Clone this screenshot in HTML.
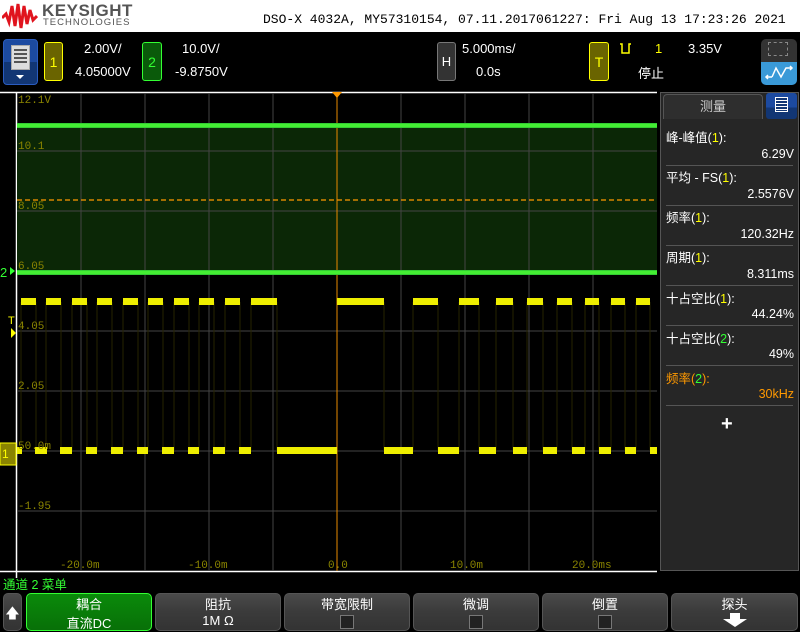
<!DOCTYPE html>
<html><head><meta charset="utf-8"><style>
*{margin:0;padding:0;box-sizing:border-box}
body{width:800px;height:632px;background:#000;position:relative;overflow:hidden;font-family:"Liberation Sans","Noto Sans CJK SC",sans-serif;color:#fff}
.a{position:absolute}
.mono{font-family:"Liberation Mono","Noto Sans CJK SC",monospace}
.btn{position:absolute;top:593px;height:38px;background:linear-gradient(#4a4a4a 0,#3c3c3c 45%,#333 100%);border:1px solid #555;border-radius:5px;text-align:center;font-size:13px;color:#fff}
.chk{display:inline-block;width:14px;height:14px;background:#222;border:1px solid #777;margin-top:2px}
.m{position:absolute;left:666px;width:128px;font-size:12.5px;color:#fff}
.sep{position:absolute;left:666px;width:127px;height:1px;background:#555}
</style></head><body>
<!-- header -->
<div class="a" style="left:0;top:0;width:800px;height:32px;background:#fff"></div>
<svg class="a" style="left:2px;top:2px" width="36" height="28" viewBox="0 0 36 28"><path d="M0 16 L4 12 L7 20 L10 4 L13 24 L16 2 L19 26 L22 4 L25 22 L28 8 L31 18 L35 14" stroke="#e0141e" stroke-width="3" fill="none"/></svg>
<div class="a" style="left:42px;top:1px;font-size:17px;font-weight:bold;color:#555;letter-spacing:0.5px">KEYSIGHT</div>
<div class="a" style="left:43px;top:17px;font-size:9.5px;color:#555;letter-spacing:1px">TECHNOLOGIES</div>
<div class="a mono" style="left:263px;top:12px;font-size:13px;color:#000;white-space:nowrap">DSO-X 4032A, MY57310154, 07.11.2017061227: Fri Aug 13 17:23:26 2021</div>
<!-- top bar -->
<div class="a" style="left:3px;top:39px;width:35px;height:46px;border-radius:4px;background:linear-gradient(#1c4aa0 0,#1c4aa0 50%,#123674 50%);border:1px solid #2a5cc0"></div>
<div class="a" style="left:11px;top:45px;width:19px;height:25px;background:#ddd;border:1px solid #aaa"></div>
<div class="a" style="left:14px;top:49px;width:13px;height:16px;background:repeating-linear-gradient(#555 0 2px,#ddd 2px 4px)"></div>
<div class="a" style="left:16px;top:75px;width:0;height:0;border-left:4px solid transparent;border-right:4px solid transparent;border-top:4px solid #fff"></div>
<div class="a" style="left:44px;top:42px;width:19px;height:39px;background:#6a6400;border:1px solid #ff0;border-radius:3px;color:#ff0;font-size:14px;text-align:center;line-height:38px">1</div>
<div class="a" style="left:84px;top:41px;font-size:13px">2.00V/</div>
<div class="a" style="left:75px;top:64px;font-size:13px">4.05000V</div>
<div class="a" style="left:142px;top:42px;width:20px;height:39px;background:#0a5a0a;border:1px solid #3f3;border-radius:3px;color:#3f3;font-size:14px;text-align:center;line-height:38px">2</div>
<div class="a" style="left:182px;top:41px;font-size:13px">10.0V/</div>
<div class="a" style="left:175px;top:64px;font-size:13px">-9.8750V</div>
<div class="a" style="left:437px;top:42px;width:19px;height:39px;background:#333;border:1px solid #777;border-radius:3px;font-size:13px;text-align:center;line-height:38px">H</div>
<div class="a" style="left:462px;top:41px;font-size:13px">5.000ms/</div>
<div class="a" style="left:476px;top:64px;font-size:13px">0.0s</div>
<div class="a" style="left:589px;top:42px;width:20px;height:39px;background:#6a6400;border:1px solid #ff0;border-radius:3px;color:#ff0;font-size:14px;text-align:center;line-height:38px">T</div>
<svg class="a" style="left:619px;top:43px" width="14" height="12"><path d="M1 1 H3 V10 H10 V1 H12" stroke="#ff0" stroke-width="1.5" fill="none"/></svg>
<div class="a" style="left:655px;top:41px;font-size:13px;color:#ff0">1</div>
<div class="a" style="left:688px;top:41px;font-size:13px">3.35V</div>
<div class="a" style="left:638px;top:63px;font-size:13px">停止</div>
<div class="a" style="left:761px;top:39px;width:36px;height:46px;border-radius:5px;background:linear-gradient(#333 0,#333 50%,#3a9ad8 50%)"></div>
<div class="a" style="left:768px;top:42px;width:20px;height:14px;border:1px dashed #888"></div>
<svg class="a" style="left:763px;top:64px" width="32" height="18"><path d="M3 13 L9 13 M5 11 L3 13 L5 15 M9 13 L13 4 L18 13 L23 4 L29 4 M27 2 L29 4 L27 6" stroke="#fff" stroke-width="1.5" fill="none"/></svg>
<!-- plot -->
<svg class="a" style="left:0;top:88px" width="660" height="490">
<line x1="0" y1="4.5" x2="657" y2="4.5" stroke="#fff" stroke-width="1.5"/>
<line x1="16.5" y1="4" x2="16.5" y2="490" stroke="#fff" stroke-width="1.5"/>
<line x1="0" y1="483.5" x2="657" y2="483.5" stroke="#fff" stroke-width="1.5"/>
<rect x="17" y="38" width="640" height="147" fill="#0b2706"/>
<g stroke="#444" stroke-width="1">
<line x1="81" y1="5" x2="81" y2="483"/><line x1="145" y1="5" x2="145" y2="483"/><line x1="209" y1="5" x2="209" y2="483"/><line x1="273" y1="5" x2="273" y2="483"/><line x1="401" y1="5" x2="401" y2="483"/><line x1="465" y1="5" x2="465" y2="483"/><line x1="529" y1="5" x2="529" y2="483"/><line x1="593" y1="5" x2="593" y2="483"/>
<line x1="17" y1="63" x2="657" y2="63"/><line x1="17" y1="123" x2="657" y2="123"/><line x1="17" y1="183" x2="657" y2="183"/><line x1="17" y1="243" x2="657" y2="243"/><line x1="17" y1="303" x2="657" y2="303"/><line x1="17" y1="363" x2="657" y2="363"/><line x1="17" y1="423" x2="657" y2="423"/>
</g>
<line x1="337" y1="5" x2="337" y2="483" stroke="#e88a00" stroke-width="1"/>
<line x1="17" y1="112" x2="657" y2="112" stroke="#f90" stroke-width="1.2" stroke-dasharray="5,3"/>
<rect x="17" y="35" width="640" height="5" fill="#3c3"/><rect x="17" y="36" width="640" height="3" fill="#4e3"/>
<rect x="17" y="182" width="640" height="5" fill="#3c3"/><rect x="17" y="183" width="640" height="3" fill="#4e3"/>
<g stroke="#262400" stroke-width="1">
<path d="M21 214V363M36 214V363M46 214V363M61 214V363M72 214V363M87 214V363M97 214V363M112 214V363M123 214V363M138 214V363M148 214V363M163 214V363M174 214V363M189 214V363M199 214V363M214 214V363M225 214V363M240 214V363M251 214V363M277 214V363M384 214V363M413 214V363M438 214V363M459 214V363M479 214V363M496 214V363M513 214V363M527 214V363M543 214V363M557 214V363M572 214V363M585 214V363M599 214V363M611 214V363M625 214V363M636 214V363M650 214V363"/>
</g>
<g fill="#ee0">
<rect x="21" y="210" width="15" height="7"/><rect x="46" y="210" width="15" height="7"/><rect x="72" y="210" width="15" height="7"/><rect x="97" y="210" width="15" height="7"/><rect x="123" y="210" width="15" height="7"/><rect x="148" y="210" width="15" height="7"/><rect x="174" y="210" width="15" height="7"/><rect x="199" y="210" width="15" height="7"/><rect x="225" y="210" width="15" height="7"/><rect x="251" y="210" width="26" height="7"/>
<rect x="337" y="210" width="47" height="7"/><rect x="413" y="210" width="25" height="7"/><rect x="459" y="210" width="20" height="7"/><rect x="496" y="210" width="17" height="7"/><rect x="527" y="210" width="16" height="7"/><rect x="557" y="210" width="15" height="7"/><rect x="585" y="210" width="14" height="7"/><rect x="611" y="210" width="14" height="7"/><rect x="636" y="210" width="14" height="7"/>
<rect x="17" y="359" width="5" height="7"/><rect x="35" y="359" width="12" height="7"/><rect x="60" y="359" width="12" height="7"/><rect x="86" y="359" width="11" height="7"/><rect x="111" y="359" width="12" height="7"/><rect x="137" y="359" width="11" height="7"/><rect x="162" y="359" width="12" height="7"/><rect x="188" y="359" width="11" height="7"/><rect x="213" y="359" width="12" height="7"/><rect x="239" y="359" width="12" height="7"/><rect x="277" y="359" width="60" height="7"/>
<rect x="384" y="359" width="29" height="7"/><rect x="438" y="359" width="21" height="7"/><rect x="479" y="359" width="17" height="7"/><rect x="513" y="359" width="14" height="7"/><rect x="543" y="359" width="14" height="7"/><rect x="572" y="359" width="13" height="7"/><rect x="599" y="359" width="12" height="7"/><rect x="625" y="359" width="11" height="7"/><rect x="650" y="359" width="7" height="7"/>
</g>
<g fill="#8a8400" font-family="Liberation Mono,monospace" font-size="11">
<text x="18" y="15">12.1V</text><text x="18" y="61">10.1</text><text x="18" y="121">8.05</text><text x="18" y="181">6.05</text><text x="18" y="241">4.05</text><text x="18" y="301">2.05</text><text x="18" y="361">50.0m</text><text x="18" y="421">-1.95</text>
<text x="60" y="480">-20.0m</text><text x="188" y="480">-10.0m</text><text x="328" y="480">0.0</text><text x="450" y="480">10.0m</text><text x="572" y="480">20.0ms</text>
</g>
<path d="M332 4 L342 4 L337 10 Z" fill="#f90"/>
<text x="0" y="189" fill="#3f3" font-size="13">2</text><path d="M10 179 L15 183 L10 187Z" fill="#3f3"/>
<text x="8" y="236" fill="#ff0" font-size="11">T</text><path d="M11 240 L16 245 L11 250Z" fill="#ff0"/>
<rect x="0" y="355" width="16" height="22" fill="#8a8400" stroke="#ff0"/><text x="2" y="370" fill="#ff0" font-size="12">1</text>
</svg>
<!-- right panel -->
<div class="a" style="left:660px;top:92px;width:139px;height:479px;background:#262626;border:1px solid #555"></div>
<div class="a" style="left:663px;top:94px;width:100px;height:25px;background:#2e2e2e;border:1px solid #555;border-bottom:none;border-radius:4px 4px 0 0;font-size:13px;color:#ccc;text-align:center;line-height:24px">测量</div>
<div class="a" style="left:766px;top:93px;width:31px;height:26px;background:linear-gradient(#1c4aa0 0,#1c4aa0 55%,#123674 55%);border-radius:3px"></div>
<div class="a" style="left:775px;top:97px;width:13px;height:15px;border:1px solid #fff;background:repeating-linear-gradient(#123674 0 2px,#fff 2px 3px)"></div>
<div class="m" style="top:127px">峰-峰值(<span style="color:#ff0">1</span>):</div>
<div class="m" style="top:147px;text-align:right">6.29V</div>
<div class="sep" style="top:165px"></div>
<div class="m" style="top:167px">平均 - FS(<span style="color:#ff0">1</span>):</div>
<div class="m" style="top:187px;text-align:right">2.5576V</div>
<div class="sep" style="top:205px"></div>
<div class="m" style="top:207px">频率(<span style="color:#ff0">1</span>):</div>
<div class="m" style="top:227px;text-align:right">120.32Hz</div>
<div class="sep" style="top:245px"></div>
<div class="m" style="top:247px">周期(<span style="color:#ff0">1</span>):</div>
<div class="m" style="top:267px;text-align:right">8.311ms</div>
<div class="sep" style="top:285px"></div>
<div class="m" style="top:288px">十占空比(<span style="color:#ff0">1</span>):</div>
<div class="m" style="top:307px;text-align:right">44.24%</div>
<div class="sep" style="top:325px"></div>
<div class="m" style="top:328px">十占空比(<span style="color:#3f3">2</span>):</div>
<div class="m" style="top:347px;text-align:right">49%</div>
<div class="sep" style="top:365px"></div>
<div class="m" style="top:368px;color:#f90">频率(<span style="color:#3f3">2</span>):</div>
<div class="m" style="top:387px;text-align:right;color:#f90">30kHz</div>
<div class="sep" style="top:405px"></div>
<div class="a" style="left:721px;top:413px;font-size:20px;font-weight:bold">+</div>
<!-- bottom -->
<div class="a" style="left:3px;top:574px;font-size:12.5px;color:#3f3">通道 2 菜单</div>
<div class="btn" style="left:3px;width:19px;"><div style="margin-top:9px;font-size:14px">🡅</div></div>
<div class="btn" style="left:26px;width:126px;background:linear-gradient(#0a8a0a,#087008);border-color:#3f3">耦合<br>直流DC</div>
<div class="btn" style="left:155px;width:126px">阻抗<br>1M Ω</div>
<div class="btn" style="left:284px;width:126px">带宽限制<br><span class="chk"></span></div>
<div class="btn" style="left:413px;width:126px">微调<br><span class="chk"></span></div>
<div class="btn" style="left:542px;width:126px">倒置<br><span class="chk"></span></div>
<div class="btn" style="left:671px;width:127px">探头<br><svg width="26" height="14"><path d="M8 0 H18 V6 H25 L13 14 L1 6 H8Z" fill="#fff"/></svg></div>
</body></html>
